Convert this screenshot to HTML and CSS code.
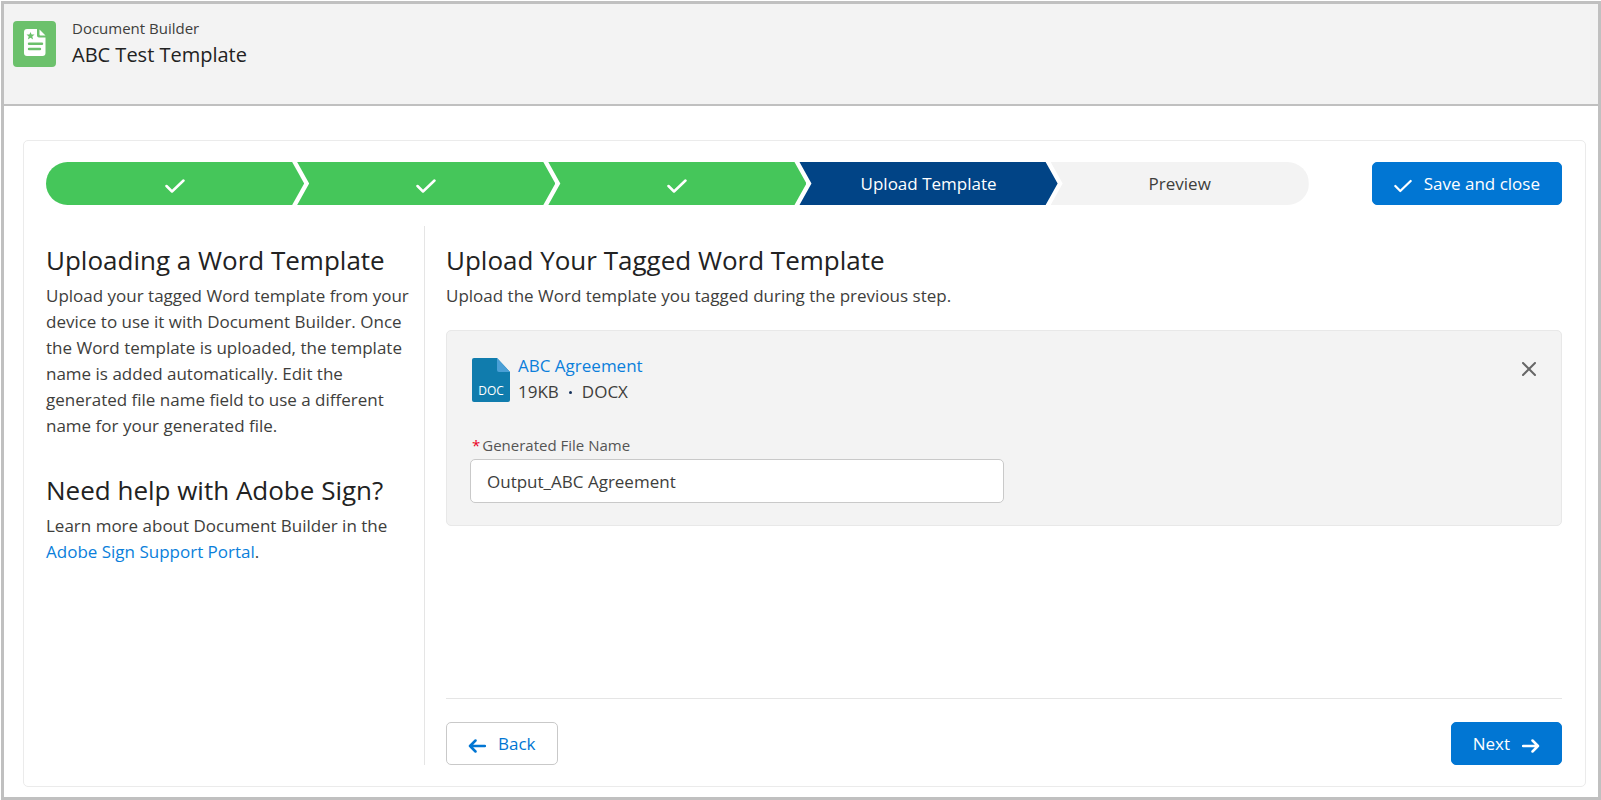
FILE: index.html
```html
<!DOCTYPE html>
<html lang="en">
<head>
<meta charset="utf-8">
<title>Document Builder</title>
<link rel="stylesheet" href="styles.css">
</head>
<body>
<div class="frame">
  <header class="header">
    <svg class="header-icon" viewBox="0 0 43 46" aria-hidden="true">
      <rect width="43" height="46" rx="4" fill="#6cc16c"/>
      <path d="M14 8h10v6.500q0 2 2 2h6.500v15.500q0 3-3 3h-15.500q-3 0-3-3v-21q0-3 3-3z" fill="#fff"/>
      <path d="M26.500 8.500l6 6h-5q-1 0-1-1z" fill="#fff"/>
      <path d="M17.500 11l1.100 2.600h2.900l-2.200 1.900.8 2.900-2.600-1.700-2.600 1.700.8-2.900-2.200-1.900h2.900z" fill="#6cc16c"/>
      <path d="M16 22.700h13M16 28h11" stroke="#6cc16c" stroke-width="2.400" stroke-linecap="round"/>
    </svg>
    <div>
      <p class="header-app">Document Builder</p>
      <h1 class="header-title">ABC Test Template</h1>
    </div>
  </header>
  <main class="card">
    <div class="top">
      <ol class="steps">
        <li class="step done first"><svg class="tick" viewBox="0 0 20 14" role="img" aria-label="Complete"><path d="M1.500 7l5.500 5.500L18.500 1.500"/></svg></li>
        <li class="step done"><svg class="tick" viewBox="0 0 20 14" role="img" aria-label="Complete"><path d="M1.500 7l5.500 5.500L18.500 1.500"/></svg></li>
        <li class="step done"><svg class="tick" viewBox="0 0 20 14" role="img" aria-label="Complete"><path d="M1.500 7l5.500 5.500L18.500 1.500"/></svg></li>
        <li class="step current" aria-current="step">Upload Template</li>
        <li class="step last">Preview</li>
      </ol>
      <button class="button primary" type="button"><svg class="tick small" viewBox="0 0 20 14" aria-hidden="true"><path d="M1.500 7l5.500 5.500L18.500 1.500"/></svg>Save and close</button>
    </div>
    <div class="columns">
      <aside class="sidebar">
        <h2 class="heading">Uploading a Word Template</h2>
        <p class="text">Upload your tagged Word template from your device to use it with Document Builder. Once the Word template is uploaded, the template name is added automatically. Edit the generated file name field to use a different name for your generated file.</p>
        <h2 class="heading help">Need help with Adobe Sign?</h2>
        <p class="text">Learn more about Document Builder in the <a class="link" href="#">Adobe Sign Support Portal</a>.</p>
      </aside>
      <section class="content">
        <h2 class="heading">Upload Your Tagged Word Template</h2>
        <p class="text">Upload the Word template you tagged during the previous step.</p>
        <div class="upload">
          <div class="file">
            <svg class="file-icon" viewBox="0 0 38 44" role="img" aria-label="DOC file">
              <path d="M2 0h23l13 14v28q0 2-2 2H2q-2 0-2-2V2q0-2 2-2z" fill="#107cad"/>
              <path d="M25 0l13 14H27q-2 0-2-2z" fill="#4a9fd6"/>
              <text class="file-icon-text" x="19" y="37" text-anchor="middle">DOC</text>
            </svg>
            <div class="file-info">
              <a class="link" href="#">ABC Agreement</a>
              <p class="meta"><span>19KB</span><span class="dot"></span><span>DOCX</span></p>
            </div>
            <button class="close" type="button" aria-label="Remove file"><svg class="close-icon" viewBox="0 0 14 14" aria-hidden="true"><path d="M1 1l12 12M13 1L1 13"/></svg></button>
          </div>
          <label class="label" for="file-name"><span class="required">*</span>Generated File Name</label>
          <input class="input" id="file-name" type="text" value="Output_ABC Agreement" required>
        </div>
        <footer class="actions">
          <button class="button secondary" type="button"><svg class="arrow" viewBox="0 0 18 14" aria-hidden="true"><path d="M17 7H2M7.500 1.500L2 7l5.500 5.500"/></svg>Back</button>
          <button class="button primary" type="button">Next<svg class="arrow" viewBox="0 0 18 14" aria-hidden="true"><path d="M1 7h15M10.500 1.500L16 7l-5.500 5.500"/></svg></button>
        </footer>
      </section>
    </div>
  </main>
</div>
</body>
</html>
```
FILE: styles.css
```css
* {
  box-sizing: border-box;
}

body {
  margin: 0;
  padding: 1px 0 0 1px;
  background: #fff;
  color: #3e3e3c;
  font-family: "Open Sans", "Noto Sans", sans-serif;
  font-size: 17px;
  line-height: 26px;
}

h1, h2, p, ol {
  margin: 0;
  padding: 0;
  font-weight: 400;
}

.frame {
  display: flex;
  flex-direction: column;
  min-height: calc(100vh - 1px);
  border: 3px solid #c0c0c0;
}

.header {
  display: flex;
  gap: 16px;
  min-height: 102px;
  padding: 10px 9px;
  background: #f3f3f3;
  border-bottom: 2px solid #c0c0c0;
}

.header-icon {
  width: 43px;
  height: 46px;
  margin-top: 7px;
}

.header-app {
  font-size: 15px;
  line-height: 28px;
}

.header-title {
  font-size: 20px;
  line-height: 26px;
  color: #222;
}

.card {
  display: flex;
  flex: 1;
  flex-direction: column;
  margin: 34px 12px 10px 19px;
  padding: 21px 23px 21px 22px;
  border: 1px solid #ebebeb;
  border-radius: 5px;
}

.top {
  display: flex;
  gap: 63px;
}

.steps {
  display: flex;
  flex: 1;
  list-style: none;
}

.step {
  display: flex;
  flex: 1;
  align-items: center;
  justify-content: center;
  height: 43px;
  margin-right: -7px;
  background: #f3f3f3;
  clip-path: polygon(0 0, calc(100% - 12px) 0, 100% 50%, calc(100% - 12px) 100%, 0 100%, 12px 50%);
}

.step.done {
  background: #45c65a;
}

.step.current {
  background: #014486;
  color: #fff;
}

.step.first {
  border-radius: 22px 0 0 22px;
  clip-path: polygon(0 0, calc(100% - 12px) 0, 100% 50%, calc(100% - 12px) 100%, 0 100%);
}

.step.last {
  margin-right: 0;
  border-radius: 0 22px 22px 0;
  clip-path: polygon(0 0, 100% 0, 100% 100%, 0 100%, 12px 50%);
}

.tick {
  width: 20px;
  height: 14px;
  margin-top: 4px;
}

.tick.small {
  width: 18px;
}

.tick, .arrow, .close-icon {
  fill: none;
  stroke: currentColor;
  stroke-width: 2;
  stroke-linecap: round;
  stroke-linejoin: round;
}

.tick, .arrow {
  stroke-width: 2.5;
}

.done .tick {
  color: #fff;
}

.button {
  display: flex;
  align-items: center;
  justify-content: center;
  gap: 12px;
  height: 43px;
  padding: 0 21px;
  border: 1px solid #0176d3;
  border-radius: 5px;
  font: inherit;
}

.primary {
  background: #0176d3;
  color: #fff;
}

.secondary {
  background: #fff;
  border-color: #c9c9c9;
  color: #0176d3;
}

.arrow {
  width: 18px;
  height: 14px;
  margin-top: 4px;
}

.columns {
  display: flex;
  flex: 1;
  margin-top: 21px;
}

.sidebar {
  width: 379px;
  padding: 17px 4px 0 0;
  border-right: 1px solid #e5e5e5;
}

.content {
  display: flex;
  flex: 1;
  flex-direction: column;
  padding: 17px 0 0 21px;
}

.heading {
  margin-bottom: 6px;
  font-size: 26px;
  line-height: 34px;
  color: #222;
}

.help {
  margin-top: 34px;
}

.link {
  color: #0b7fdb;
  text-decoration: none;
}

.upload {
  margin-top: 21px;
  padding: 22px 23px;
  background: #f3f3f3;
  border: 1px solid #e8e8e8;
  border-radius: 5px;
}

.file {
  display: flex;
  gap: 8px;
}

.file-icon {
  width: 38px;
  height: 44px;
  margin: 5px 0 0 2px;
}

.file-icon-text {
  fill: #fff;
  font-size: 12px;
}

.file-info {
  flex: 1;
}

.meta {
  display: flex;
  align-items: center;
  gap: 10px;
}

.dot {
  width: 3px;
  height: 3px;
  border-radius: 50%;
  background: #16325c;
}

.close {
  align-self: flex-start;
  display: flex;
  margin-top: 7px;
  padding: 2px;
  border: 0;
  background: none;
  color: #666;
}

.close-icon {
  width: 14px;
  height: 14px;
}

.label {
  display: block;
  margin: 27px 0 1px 2px;
  font-size: 15px;
  color: #555;
}

.required {
  margin-right: 2px;
  color: #ea001e;
}

.input {
  display: block;
  width: 50%;
  height: 44px;
  padding: 0 16px;
  border: 1px solid #c9c9c9;
  border-radius: 5px;
  background: #fff;
  color: #3e3e3c;
  font: inherit;
}

.actions {
  display: flex;
  justify-content: space-between;
  margin-top: auto;
  padding-top: 23px;
  border-top: 1px solid #e5e5e5;
}
```
